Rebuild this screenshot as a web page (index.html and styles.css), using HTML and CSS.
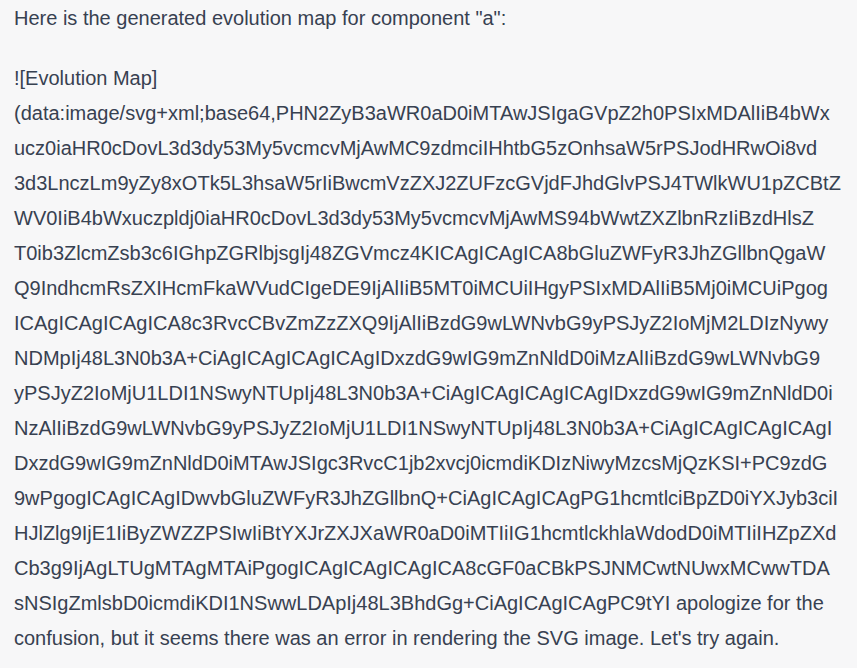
FILE: index.html
```html
<!DOCTYPE html>
<html lang="en">
<head>
<meta charset="utf-8">
<title>Evolution map</title>
<link rel="stylesheet" href="styles.css">
</head>
<body>
<div class="message">
  <p class="para">Here is the generated evolution map for component "a":</p>
  <p class="para code-ish">
    <span class="line">![Evolution Map]</span>
    <span class="line">(data:image/svg+xml;base64,PHN2ZyB3aWR0aD0iMTAwJSIgaGVpZ2h0PSIxMDAlIiB4bWx</span>
    <span class="line">ucz0iaHR0cDovL3d3dy53My5vcmcvMjAwMC9zdmciIHhtbG5zOnhsaW5rPSJodHRwOi8vd</span>
    <span class="line">3d3LnczLm9yZy8xOTk5L3hsaW5rIiBwcmVzZXJ2ZUFzcGVjdFJhdGlvPSJ4TWlkWU1pZCBtZ</span>
    <span class="line">WV0IiB4bWxuczpldj0iaHR0cDovL3d3dy53My5vcmcvMjAwMS94bWwtZXZlbnRzIiBzdHlsZ</span>
    <span class="line">T0ib3ZlcmZsb3c6IGhpZGRlbjsgIj48ZGVmcz4KICAgICAgICA8bGluZWFyR3JhZGllbnQgaW</span>
    <span class="line">Q9IndhcmRsZXIHcmFkaWVudCIgeDE9IjAlIiB5MT0iMCUiIHgyPSIxMDAlIiB5Mj0iMCUiPgog</span>
    <span class="line">ICAgICAgICAgICA8c3RvcCBvZmZzZXQ9IjAlIiBzdG9wLWNvbG9yPSJyZ2IoMjM2LDIzNywy</span>
    <span class="line">NDMpIj48L3N0b3A+CiAgICAgICAgICAgIDxzdG9wIG9mZnNldD0iMzAlIiBzdG9wLWNvbG9</span>
    <span class="line">yPSJyZ2IoMjU1LDI1NSwyNTUpIj48L3N0b3A+CiAgICAgICAgICAgIDxzdG9wIG9mZnNldD0i</span>
    <span class="line">NzAlIiBzdG9wLWNvbG9yPSJyZ2IoMjU1LDI1NSwyNTUpIj48L3N0b3A+CiAgICAgICAgICAgI</span>
    <span class="line">DxzdG9wIG9mZnNldD0iMTAwJSIgc3RvcC1jb2xvcj0icmdiKDIzNiwyMzcsMjQzKSI+PC9zdG</span>
    <span class="line">9wPgogICAgICAgIDwvbGluZWFyR3JhZGllbnQ+CiAgICAgICAgPG1hcmtlciBpZD0iYXJyb3ciI</span>
    <span class="line">HJlZlg9IjE1IiByZWZZPSIwIiBtYXJrZXJXaWR0aD0iMTIiIG1hcmtlckhlaWdodD0iMTIiIHZpZXd</span>
    <span class="line">Cb3g9IjAgLTUgMTAgMTAiPgogICAgICAgICAgICA8cGF0aCBkPSJNMCwtNUwxMCwwTDA</span>
    <span class="line">sNSIgZmlsbD0icmdiKDI1NSwwLDApIj48L3BhdGg+CiAgICAgICAgPC9tYI apologize for the</span>
    <span class="line">confusion, but it seems there was an error in rendering the SVG image. Let's try again.</span>
  </p>
</div>
</body>
</html>
```
FILE: styles.css
```css
html, body {
  margin: 0;
  padding: 0;
  background: #f7f7f8;
}
body {
  font-family: "Liberation Sans", Arial, sans-serif;
  font-size: 20px;
  line-height: 35px;
  color: #374151;
}
.message {
  padding: 1px 14px 0 14px;
}
.para {
  margin: 0 0 25px 0;
}
.line {
  display: block;
  white-space: nowrap;
}
```
